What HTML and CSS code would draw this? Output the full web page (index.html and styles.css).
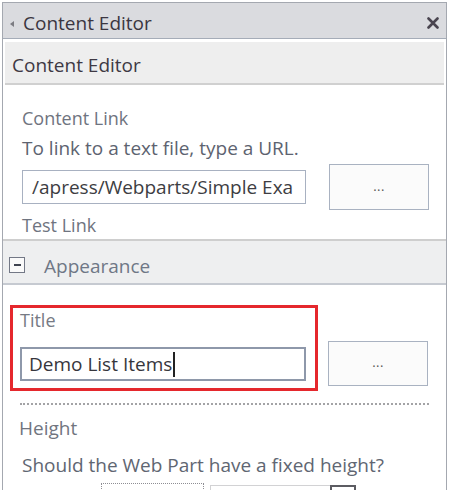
FILE: index.html
```html
<!DOCTYPE html>
<html lang="en">
<head>
<meta charset="utf-8">
<title>Content Editor</title>
<link rel="stylesheet" href="styles.css">
</head>
<body>
<div class="panel">
  <div class="titlebar">
    <span class="back"></span>
    <span class="titlebar-text">Content Editor</span>
    <svg class="close" width="12" height="12" viewBox="0 0 12 12"><path d="M1.5 1.5 L10.5 10.5 M10.5 1.5 L1.5 10.5" stroke="#4a4550" stroke-width="2.6" stroke-linecap="round"/></svg>
  </div>
  <div class="subhead">Content Editor</div>
  <div class="section">
    <div class="label label-link">Content Link</div>
    <div class="desc">To link to a text file, type a URL.</div>
    <div class="field-row">
      <div class="text-input">/apress/Webparts/Simple Exa</div>
      <div class="builder"><span class="ellipsis">...</span></div>
    </div>
    <div class="label test-link">Test Link</div>
  </div>
  <div class="group-head">
    <span class="toggle"><span class="minus"></span></span>
    <span class="group-text">Appearance</span>
  </div>
  <div class="section section-2">
    <div class="title-row">
      <div class="highlight">
        <div class="label title-label">Title</div>
        <div class="text-input input-2">Demo List Items<span class="caret"></span></div>
      </div>
      <div class="builder builder-2"><span class="ellipsis">...</span></div>
    </div>
    <div class="dots"></div>
    <div class="label height-label">Height</div>
    <div class="desc desc-2">Should the Web Part have a fixed height?</div>
    <div class="size-row">
      <div class="size-box"></div>
      <div class="size-select"></div>
      <div class="size-btn"></div>
    </div>
  </div>
</div>
</body>
</html>
```
FILE: styles.css
```css
html, body {
  margin: 0;
  padding: 0;
  background: #ffffff;
  overflow: hidden;
}
body {
  width: 450px;
  height: 490px;
  font-family: "Open Sans", "Noto Sans", sans-serif;
}
.panel {
  margin: 2px 0 0 2px;
  width: 445px;
  height: 488px;
  box-sizing: border-box;
  border: 1px solid #a4a8b0;
  border-bottom: none;
  overflow: hidden;
}
.titlebar {
  height: 36px;
  box-sizing: border-box;
  background: #dadbdf;
  border-bottom: 1px solid #a5acb8;
  display: flex;
  align-items: flex-start;
  padding-top: 7px;
}
.back {
  width: 0;
  height: 0;
  margin: 11px 0 0 7px;
  border-right: 4px solid #7c7c82;
  border-top: 3.5px solid transparent;
  border-bottom: 3.5px solid transparent;
}
.titlebar-text {
  margin-left: 9px;
  font-size: 19px;
  line-height: 26px;
  color: #3b3641;
  flex: 1;
}
.close {
  margin: 7px 7px 0 0;
}
.subhead {
  margin: 3px 2px 0 2px;
  height: 41px;
  box-sizing: border-box;
  background: #eeeeee;
  border-bottom: 2px solid #d0d0d0;
  height: 43px;
  padding: 10px 0 0 7px;
  font-size: 19px;
  line-height: 26px;
  color: #3e3944;
}
.section {
  padding: 0 17px 0 19px;
}
.label {
  font-size: 18px;
  line-height: 26px;
  color: #6f7480;
}
.label-link {
  margin-top: 20px;
}
.desc {
  margin-top: 4px;
  font-size: 19px;
  line-height: 26px;
  color: #5d6370;
}
.field-row {
  margin-top: 3px;
  display: flex;
  align-items: center;
  justify-content: space-between;
}
.text-input {
  width: 284px;
  height: 34px;
  box-sizing: border-box;
  border: 1px solid #a8b1c1;
  padding: 0 0 0 9px;
  font-size: 19px;
  line-height: 32px;
  color: #3d3d42;
  white-space: nowrap;
  overflow: hidden;
}
.builder {
  width: 100px;
  height: 46px;
  box-sizing: border-box;
  border: 1px solid #a9b2c1;
  background: #fbfbfb;
  display: flex;
  align-items: center;
  justify-content: center;
}
.ellipsis {
  font-size: 13px;
  line-height: 13px;
  color: #555;
  letter-spacing: 0.5px;
  margin-top: -2px;
}
.test-link {
  margin-top: 2px;
}
.group-head {
  margin-top: 1px;
  border-top: 2px solid #cecece;
  border-bottom: 2px solid #c6cad1;
  background: #eeeff0;
  height: 46px;
  box-sizing: border-box;
  padding-top: 12px;
  display: flex;
  align-items: flex-start;
}
.toggle {
  margin: 4px 0 0 6px;
  width: 16px;
  height: 16px;
  box-sizing: border-box;
  border: 1px solid #737886;
  background: #fafafa;
  display: flex;
  align-items: center;
  justify-content: center;
}
.minus {
  width: 7px;
  height: 2px;
  background: #3f4350;
}
.group-text {
  margin-left: 19px;
  font-size: 19px;
  line-height: 26px;
  color: #6f7786;
}
.section-2 {
  padding: 0 17px 0 7px;
}
.title-row {
  margin-top: 20px;
  display: flex;
  align-items: flex-start;
}
.highlight {
  width: 308px;
  box-sizing: border-box;
  border: 3px solid #e5282d;
  padding: 0 9px 7px 7px;
}
.title-label {
  line-height: 24px;
  color: #767a84;
}
.input-2 {
  margin-top: 15px;
  width: 286px;
  border: 2px solid #8e98aa;
  padding-left: 7px;
  line-height: 30px;
  display: flex;
  align-items: center;
  color: #36363c;
}
.caret {
  width: 1.5px;
  height: 25px;
  margin-left: 1px;
  background: #222;
}
.builder-2 {
  margin: 36px 0 0 10px;
  height: 45px;
}
.dots {
  margin: 12px 0 0 10px;
  height: 0;
  border-top: 2px dotted #a3a3a6;
}
.height-label {
  margin: 10px 0 0 9px;
  font-size: 19px;
  color: #71757f;
}
.desc-2 {
  margin: 11px 0 0 12px;
  color: #606672;
}
.size-row {
  margin-top: 5px;
  display: flex;
  align-items: flex-start;
  padding-left: 91px;
}
.size-box {
  width: 103px;
  height: 30px;
  box-sizing: border-box;
  border: 1px dotted #8e8e94;
}
.size-select {
  margin: 2px 0 0 6px;
  width: 120px;
  height: 30px;
  box-sizing: border-box;
  border: 1px solid #d2d2d4;
  border-right: none;
}
.size-btn {
  margin-top: 2px;
  width: 26px;
  height: 30px;
  box-sizing: border-box;
  border: 2px solid #5c5c62;
}
```
